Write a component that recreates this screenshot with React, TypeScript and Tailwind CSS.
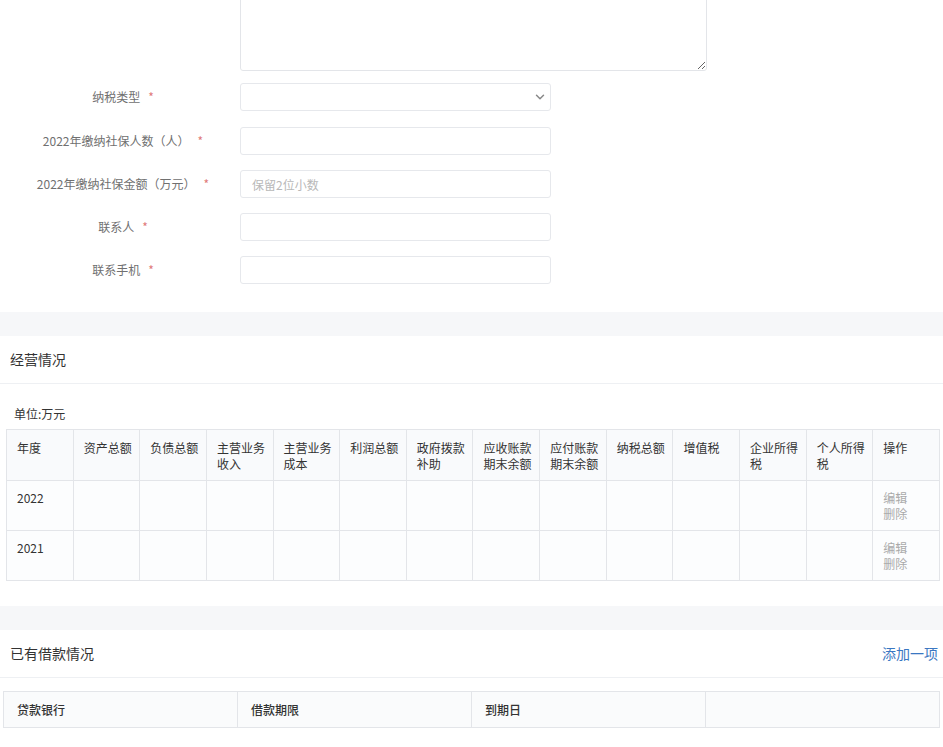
import { ChevronDown } from "lucide-react";

const font = { fontFamily: '"Noto Sans CJK SC", "Noto Sans", sans-serif' };

const fields = [
  { label: "2022年缴纳社保人数（人）", placeholder: "" },
  { label: "2022年缴纳社保金额（万元）", placeholder: "保留2位小数" },
  { label: "联系人", placeholder: "" },
  { label: "联系手机", placeholder: "" },
];

const columns = [
  ["年度"],
  ["资产总额"],
  ["负债总额"],
  ["主营业务", "收入"],
  ["主营业务", "成本"],
  ["利润总额"],
  ["政府拨款", "补助"],
  ["应收账款", "期末余额"],
  ["应付账款", "期末余额"],
  ["纳税总额"],
  ["增值税"],
  ["企业所得", "税"],
  ["个人所得", "税"],
  ["操作"],
];

function Label({ text }: { text: string }) {
  return (
    <div className="w-[240px] shrink-0 pl-[6px] text-center text-[12px] text-[#707070]">
      {text}
      <span className="ml-[8px] text-[#e07a7a]">*</span>
    </div>
  );
}

function SectionHead({ title, action }: { title: string; action?: string }) {
  return (
    <>
      <div className="h-[24px] bg-[#f6f7f9]" />
      <div className="flex h-[48px] items-center justify-between border-b border-[#eef0f3] pl-[10px] pr-[5px]">
        <span className="text-[14px] text-[#333]">{title}</span>
        {action && <span className="text-[14px] text-[#3a77c2]">{action}</span>}
      </div>
    </>
  );
}

export default function App() {
  return (
    <div className="min-h-[747px] w-[943px] bg-white" style={font}>
      {/* form */}
      <div className="flex flex-col">
        <div className="flex">
          <div className="w-[240px] shrink-0" />
          <div className="h-[71px] w-[467px] overflow-hidden">
            <textarea className="-mt-[20px] block h-[91px] w-[467px] rounded-[3px] border border-[#e3e5e9] bg-white outline-none" />
          </div>
        </div>

        <div className="mt-[12px] flex items-center">
          <Label text="纳税类型" />
          <div className="flex h-[28px] w-[311px] items-center justify-end rounded-[3px] border border-[#e6e8ec] pr-[3px]">
            <ChevronDown className="h-[14px] w-[14px] text-[#888]" strokeWidth={2.5} />
          </div>
        </div>

        <div className="mt-[16px] flex flex-col gap-[15px]">
          {fields.map((f) => (
            <div key={f.label} className="flex h-[28px] items-center">
              <Label text={f.label} />
              <input
                placeholder={f.placeholder}
                className="h-[28px] w-[311px] rounded-[3px] border border-[#e6e8ec] px-[11px] text-[12px] outline-none placeholder:text-[#b8b8b8]"
              />
            </div>
          ))}
        </div>
      </div>

      <div className="h-[28px]" />

      {/* 经营情况 */}
      <SectionHead title="经营情况" />
      <div className="px-[6px] pt-[21px]">
        <div className="pl-[8px] text-[12px] text-[#333]">单位:万元</div>
        <table className="mt-[6px] w-[934px] table-fixed border-collapse text-[12px] text-[#333]">
          <thead>
            <tr className="bg-[#f9fafc]">
              {columns.map((c, i) => (
                <th
                  key={i}
                  className="h-[51px] border border-[#e3e5e9] pl-[10px] pr-[2px] pt-[10px] text-left align-top font-normal leading-[16px]"
                >
                  {c.map((l) => (
                    <div key={l} className="whitespace-nowrap">
                      {l}
                    </div>
                  ))}
                </th>
              ))}
            </tr>
          </thead>
          <tbody>
            {["2022", "2021"].map((y) => (
              <tr key={y} className="bg-[#fcfdfe]">
                {columns.map((_, i) => (
                  <td
                    key={i}
                    className="h-[50px] border border-[#e3e5e9] pl-[10px] pr-[2px] pt-[9px] align-top leading-[16px]"
                  >
                    {i === 0 && y}
                    {i === columns.length - 1 && (
                      <div className="text-[#aaa]">
                        <div>编辑</div>
                        <div>删除</div>
                      </div>
                    )}
                  </td>
                ))}
              </tr>
            ))}
          </tbody>
        </table>
      </div>

      <div className="h-[25px]" />

      {/* 已有借款情况 */}
      <SectionHead title="已有借款情况" action="添加一项" />
      <div className="px-[3px] pt-[13px]">
        <table className="w-[937px] table-fixed border-collapse text-[12px] text-[#333]">
          <thead>
            <tr className="bg-[#fafbfc]">
              {["贷款银行", "借款期限", "到期日", ""].map((h, i) => (
                <th
                  key={i}
                  className="h-[36px] border border-[#e3e5e9] px-[13px] text-left align-middle font-medium"
                >
                  {h}
                </th>
              ))}
            </tr>
          </thead>
        </table>
      </div>
    </div>
  );
}
